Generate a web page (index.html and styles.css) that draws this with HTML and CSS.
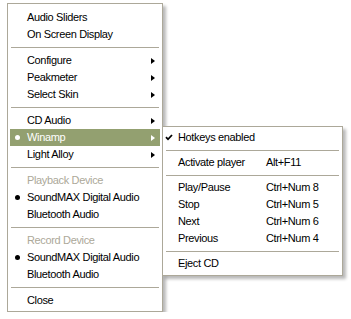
FILE: index.html
```html
<!DOCTYPE html>
<html lang="en">
<head>
    <meta charset="UTF-8">
    <meta name="viewport" content="width=device-width, initial-scale=1.0">
    <title>Tray Menu</title>
    <link rel="stylesheet" href="styles.css">
</head>
<body>
    <div class="menu main-menu">
        <div class="item"><span class="mark"></span><span class="label">Audio Sliders</span></div>
        <div class="item"><span class="mark"></span><span class="label">On Screen Display</span></div>
        <div class="sep"></div>
        <div class="item"><span class="mark"></span><span class="label">Configure</span><span class="arrow"></span></div>
        <div class="item"><span class="mark"></span><span class="label">Peakmeter</span><span class="arrow"></span></div>
        <div class="item"><span class="mark"></span><span class="label">Select Skin</span><span class="arrow"></span></div>
        <div class="sep"></div>
        <div class="item"><span class="mark"></span><span class="label">CD Audio</span><span class="arrow"></span></div>
        <div class="item active">
            <span class="mark"><span class="dot"></span></span><span class="label">Winamp</span><span class="arrow"></span>

            <!-- submenu of Winamp -->
            <div class="menu submenu">
                <div class="item">
                    <span class="mark">
                        <svg class="check" width="8" height="7" viewBox="0 0 8 7">
                            <path d="M1 3.2 L3 5.3 L7 1" fill="none" stroke="#000" stroke-width="1.8"/>
                        </svg>
                    </span>
                    <span class="label">Hotkeys enabled</span>
                </div>
                <div class="sep"></div>
                <div class="item"><span class="mark"></span><span class="label">Activate player</span><span class="key">Alt+F11</span></div>
                <div class="sep"></div>
                <div class="item"><span class="mark"></span><span class="label">Play/Pause</span><span class="key">Ctrl+Num 8</span></div>
                <div class="item"><span class="mark"></span><span class="label">Stop</span><span class="key">Ctrl+Num 5</span></div>
                <div class="item"><span class="mark"></span><span class="label">Next</span><span class="key">Ctrl+Num 6</span></div>
                <div class="item"><span class="mark"></span><span class="label">Previous</span><span class="key">Ctrl+Num 4</span></div>
                <div class="sep"></div>
                <div class="item"><span class="mark"></span><span class="label">Eject CD</span></div>
            </div>
        </div>
        <div class="item"><span class="mark"></span><span class="label">Light Alloy</span><span class="arrow"></span></div>
        <div class="sep"></div>
        <div class="item disabled"><span class="mark"></span><span class="label">Playback Device</span></div>
        <div class="item"><span class="mark"><span class="dot"></span></span><span class="label">SoundMAX Digital Audio</span></div>
        <div class="item"><span class="mark"></span><span class="label">Bluetooth Audio</span></div>
        <div class="sep"></div>
        <div class="item disabled"><span class="mark"></span><span class="label">Record Device</span></div>
        <div class="item"><span class="mark"><span class="dot"></span></span><span class="label">SoundMAX Digital Audio</span></div>
        <div class="item"><span class="mark"></span><span class="label">Bluetooth Audio</span></div>
        <div class="sep"></div>
        <div class="item"><span class="mark"></span><span class="label">Close</span></div>
    </div>
</body>
</html>
```

FILE: styles.css
```css
body {
    margin: 0;
    padding: 3px 0 0 7px;
    background: #fff;
    font-family: "Liberation Sans", Arial, sans-serif;
    font-size: 11px;
    letter-spacing: -0.35px;
    color: #000;
}
.menu {
    box-sizing: border-box;
    background: #fff;
    border: 1px solid #aca899;
    box-shadow: 3px 3px 3px rgba(0, 0, 0, 0.28);
}
.main-menu {
    width: 156px;
    padding: 5px 2px 2px 2px;
}
.item {
    display: flex;
    align-items: center;
    height: 17px;
    line-height: 17px;
    white-space: nowrap;
}
.mark {
    width: 17px;
    height: 17px;
    display: flex;
    align-items: center;
    padding-left: 5px;
    box-sizing: border-box;
    flex-shrink: 0;
}
.dot {
    width: 5px;
    height: 5px;
    border-radius: 50%;
    background: #000;
}
.label {
    flex: 1;
}
.arrow {
    width: 0;
    height: 0;
    margin-right: 5px;
    border-left: 4px solid #000;
    border-top: 3.5px solid transparent;
    border-bottom: 3.5px solid transparent;
}
.sep {
    height: 1px;
    margin: 4px 1px 4px 1px;
    background: #aca899;
}
.disabled {
    color: #aca899;
}
.active {
    position: relative;
    background: #93a070;
    color: #fff;
}
.active > .mark .dot {
    background: #fff;
}
.active > .arrow {
    border-left-color: #fff;
}

/* submenu */
.submenu {
    position: absolute;
    left: calc(100% + 2px);
    top: -3px;
    width: 181px;
    padding: 2px 2px 3px 2px;
    color: #000;
    z-index: 2;
}
.submenu .sep {
    margin: 4px 1px 3px 1px;
}
.submenu .mark {
    width: 13px;
    padding-left: 0;
}
.submenu .label {
    flex: none;
    width: 88px;
}
.check {
    display: block;
}
```
